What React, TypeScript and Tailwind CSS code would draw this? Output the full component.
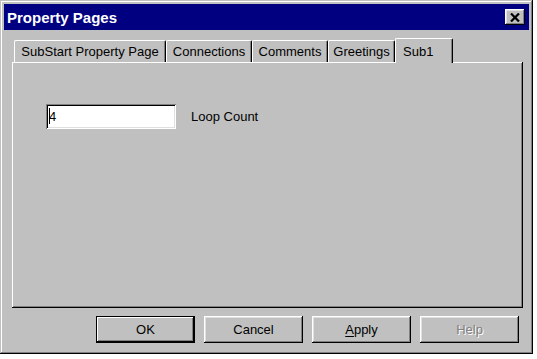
const raised =
  "shadow-[inset_-1px_-1px_0_#000,inset_1px_1px_0_#fff,inset_-2px_-2px_0_#808080,inset_2px_2px_0_#dfdfdf]";

type Tab = { label: string; w: string; active?: boolean };

const tabs: Tab[] = [
  { label: "SubStart Property Page", w: "w-[152px]" },
  { label: "Connections", w: "w-[86px]" },
  { label: "Comments", w: "w-[76px]" },
  { label: "Greetings", w: "w-[67px]" },
  { label: "Sub1", w: "w-[58px]", active: true },
];

function CloseButton() {
  return (
    <div className={`w-[20px] h-[16px] bg-[#c0c0c0] flex items-center justify-center ${raised}`}>
      <svg width="10" height="9" viewBox="0 0 10 9">
        <path d="M1 0.5 L9 8.5 M9 0.5 L1 8.5" stroke="#000" strokeWidth="2.2" />
      </svg>
    </div>
  );
}

function DialogButton({ children, isDefault, disabled }: { children: React.ReactNode; isDefault?: boolean; disabled?: boolean }) {
  const frame = isDefault
    ? "border border-black shadow-[inset_-1px_-1px_0_#000,inset_1px_1px_0_#fff,inset_-2px_-2px_0_#808080]"
    : raised;
  return (
    <div className={`w-[99px] h-[27px] bg-[#c0c0c0] flex items-center justify-center text-[13px] ${frame}`}>
      <span className={disabled ? "text-[#808080] [text-shadow:1px_1px_0_#fff]" : "text-black"}>{children}</span>
    </div>
  );
}

export default function App() {
  return (
    <div className="w-[537px] h-[359px] bg-white font-['Liberation_Sans',Arial,sans-serif] select-none">
      <div className="w-[533px] h-[354px] bg-[#c0c0c0] p-[4px] shadow-[inset_-1px_-1px_0_#000,inset_1px_1px_0_#c0c0c0,inset_-2px_-2px_0_#808080,inset_2px_2px_0_#fff]">
        {/* Title bar */}
        <div className="h-[26px] bg-[#000080] flex items-center justify-between pl-[3px] pr-[4px]">
          <span className="text-white font-bold text-[15px] leading-none">Property Pages</span>
          <CloseButton />
        </div>

        {/* Tabs */}
        <div className="mt-[8px] ml-[10px] flex items-end h-[25px] -mb-[1px] relative z-10">
          {tabs.map((t) =>
            t.active ? (
              <div
                key={t.label}
                className={`${t.w} h-[25px] bg-[#c0c0c0] border-t border-l border-white border-r border-r-black rounded-t-[2px] shadow-[inset_-1px_0_0_#808080] flex items-start justify-start pl-[7px] pt-[3px] text-[13px] text-black`}
              >
                {t.label}
              </div>
            ) : (
              <div
                key={t.label}
                className={`${t.w} h-[22px] mb-[1px] bg-[#c0c0c0] border-t border-l border-white border-r border-r-black rounded-t-[2px] shadow-[inset_-1px_0_0_#808080] flex items-center justify-center pt-[1px] text-[13px] text-black`}
              >
                {t.label}
              </div>
            )
          )}
        </div>

        {/* Page */}
        <div className="ml-[8px] w-[511px] h-[246px] bg-[#c0c0c0] shadow-[inset_-1px_-1px_0_#000,inset_1px_1px_0_#fff,inset_-2px_-2px_0_#808080] pt-[42px] pl-[34px]">
          <div className="flex items-center">
            <div className="w-[130px] h-[25px] bg-white flex items-center pl-[3px] shadow-[inset_1px_1px_0_#808080,inset_-1px_-1px_0_#fff,inset_2px_2px_0_#000,inset_-2px_-2px_0_#dfdfdf]">
              <span className="relative text-[13px] text-black leading-none">
                <span className="absolute left-0 top-[-2px] w-[1px] h-[16px] bg-black" />
                4
              </span>
            </div>
            <span className="ml-[15px] text-[13px] text-black">Loop Count</span>
          </div>
        </div>

        {/* Buttons */}
        <div className="mt-[8px] pl-[92px] flex gap-[9px]">
          <DialogButton isDefault>OK</DialogButton>
          <DialogButton>Cancel</DialogButton>
          <DialogButton>
            <span className="underline underline-offset-2">A</span>pply
          </DialogButton>
          <DialogButton disabled>Help</DialogButton>
        </div>
      </div>
    </div>
  );
}
